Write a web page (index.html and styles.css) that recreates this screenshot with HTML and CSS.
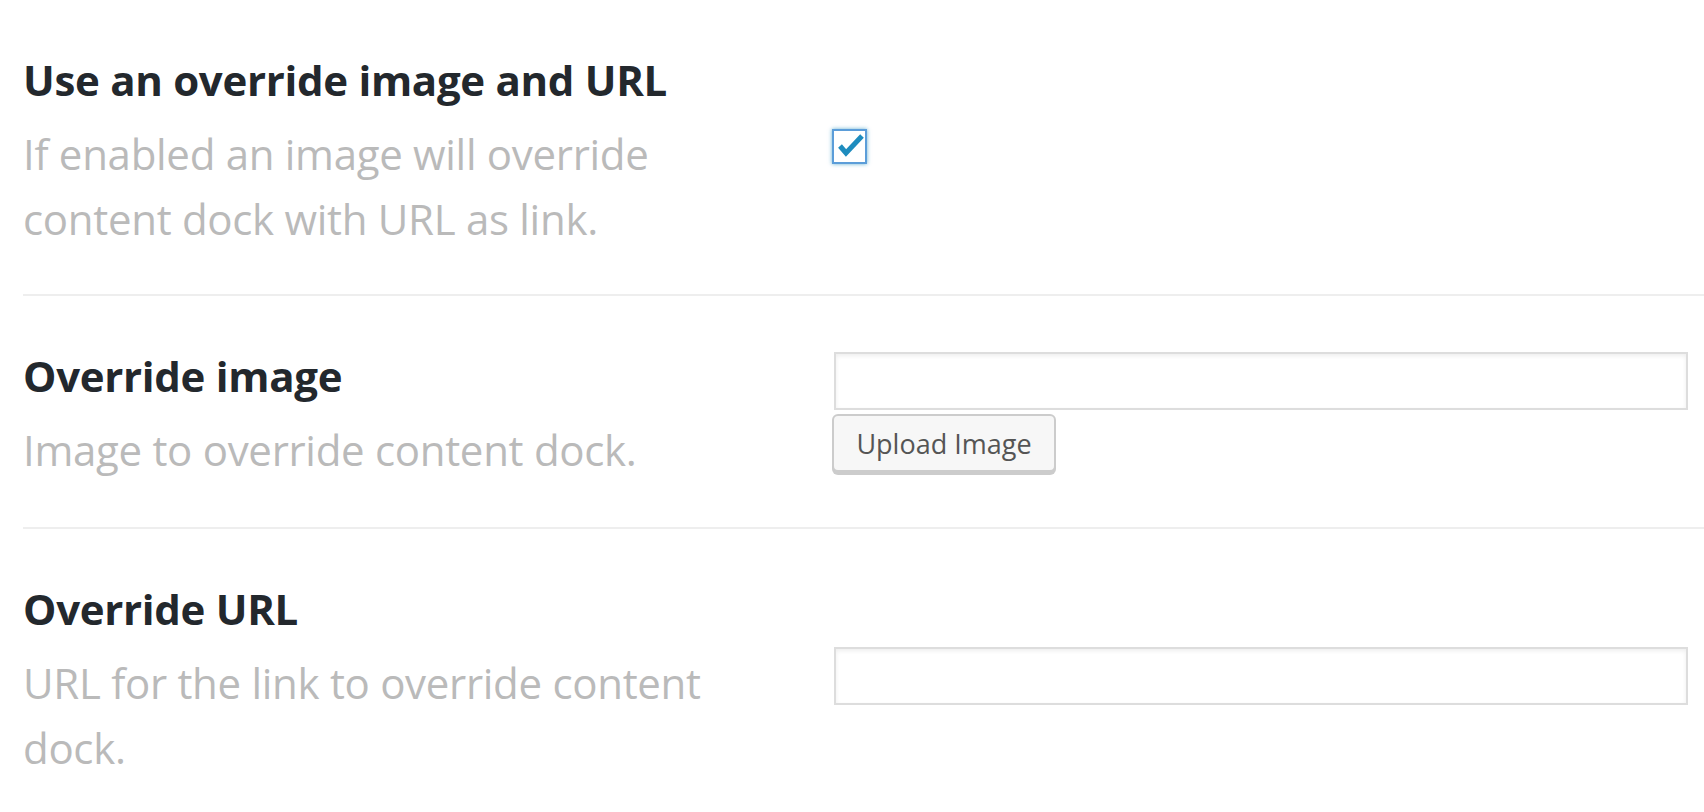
FILE: index.html
```html
<!DOCTYPE html>
<html lang="en">
<head>
<meta charset="utf-8">
<title>Override settings</title>
<link rel="stylesheet" href="styles.css">
</head>
<body>
<div class="settings">
  <div class="row row-first">
    <div class="label">
      <h3 class="title">Use an override image and URL</h3>
      <p class="desc">If enabled an image will override content dock with URL as link.</p>
    </div>
    <div class="field">
      <span class="checkbox" role="checkbox" aria-checked="true">
        <svg viewBox="0 0 30 30" width="30" height="30" aria-hidden="true"><polyline points="5,14 11,21 27,4" fill="none" stroke="#1e8cbe" stroke-width="5"/></svg>
      </span>
    </div>
  </div>
  <div class="row">
    <div class="label">
      <h3 class="title">Override image</h3>
      <p class="desc">Image to override content dock.</p>
    </div>
    <div class="field field-stack">
      <input class="text-input" type="text">
      <button class="button" type="button">Upload Image</button>
    </div>
  </div>
  <div class="row">
    <div class="label">
      <h3 class="title">Override URL</h3>
      <p class="desc">URL for the link to override content dock.</p>
    </div>
    <div class="field field-single">
      <input class="text-input" type="text">
    </div>
  </div>
</div>
</body>
</html>
```

FILE: styles.css
```css
html, body {
  margin: 0;
  padding: 0;
  background: #fff;
}

body {
  font-family: "Open Sans", "Noto Sans", sans-serif;
}

.settings {
  padding-left: 23px;
}

.row {
  display: grid;
  grid-template-columns: 809px 1fr;
  align-items: center;
  padding: 52px 16px 45px 0;
  border-bottom: 2px solid #eee;
}

.row-first {
  padding-bottom: 43px;
}

.label {
  max-width: 740px;
}

.title {
  margin: 0 0 13px;
  font-size: 42px;
  line-height: 56px;
  font-weight: 700;
  letter-spacing: -0.3px;
  color: #23282d;
}

.desc {
  margin: 0;
  font-size: 42px;
  line-height: 65px;
  font-weight: 400;
  letter-spacing: -0.3px;
  color: #bababa;
}

.field {
  display: flex;
  align-items: center;
}

.field-stack {
  flex-direction: column;
  align-items: flex-start;
  gap: 4px;
  margin-bottom: 6px;
}

.field-single {
  margin-bottom: 9px;
}

.checkbox {
  box-sizing: border-box;
  width: 35px;
  height: 35px;
  border: 2px solid #5b9dd9;
  box-shadow: 0 0 4px rgba(30, 140, 190, 0.7);
  background: #fff;
  display: flex;
  align-items: center;
  justify-content: center;
  margin-top: -10px;
}

.text-input {
  box-sizing: border-box;
  display: block;
  width: calc(100% - 2px);
  margin: 0 0 0 2px;
  height: 58px;
  border: 2px solid #ddd;
  background: #fff;
  box-shadow: inset 0 2px 4px rgba(0, 0, 0, 0.07);
  font-family: inherit;
  font-size: 28px;
  padding: 0 10px;
}

.button {
  box-sizing: border-box;
  height: 58px;
  width: 224px;
  padding: 0 20px;
  border: 2px solid #ccc;
  border-radius: 6px;
  background: #f7f7f7;
  box-shadow: 0 3px 0 #ccc;
  color: #555;
  font-family: inherit;
  font-size: 27px;
  line-height: 1;
  cursor: pointer;
}
```
